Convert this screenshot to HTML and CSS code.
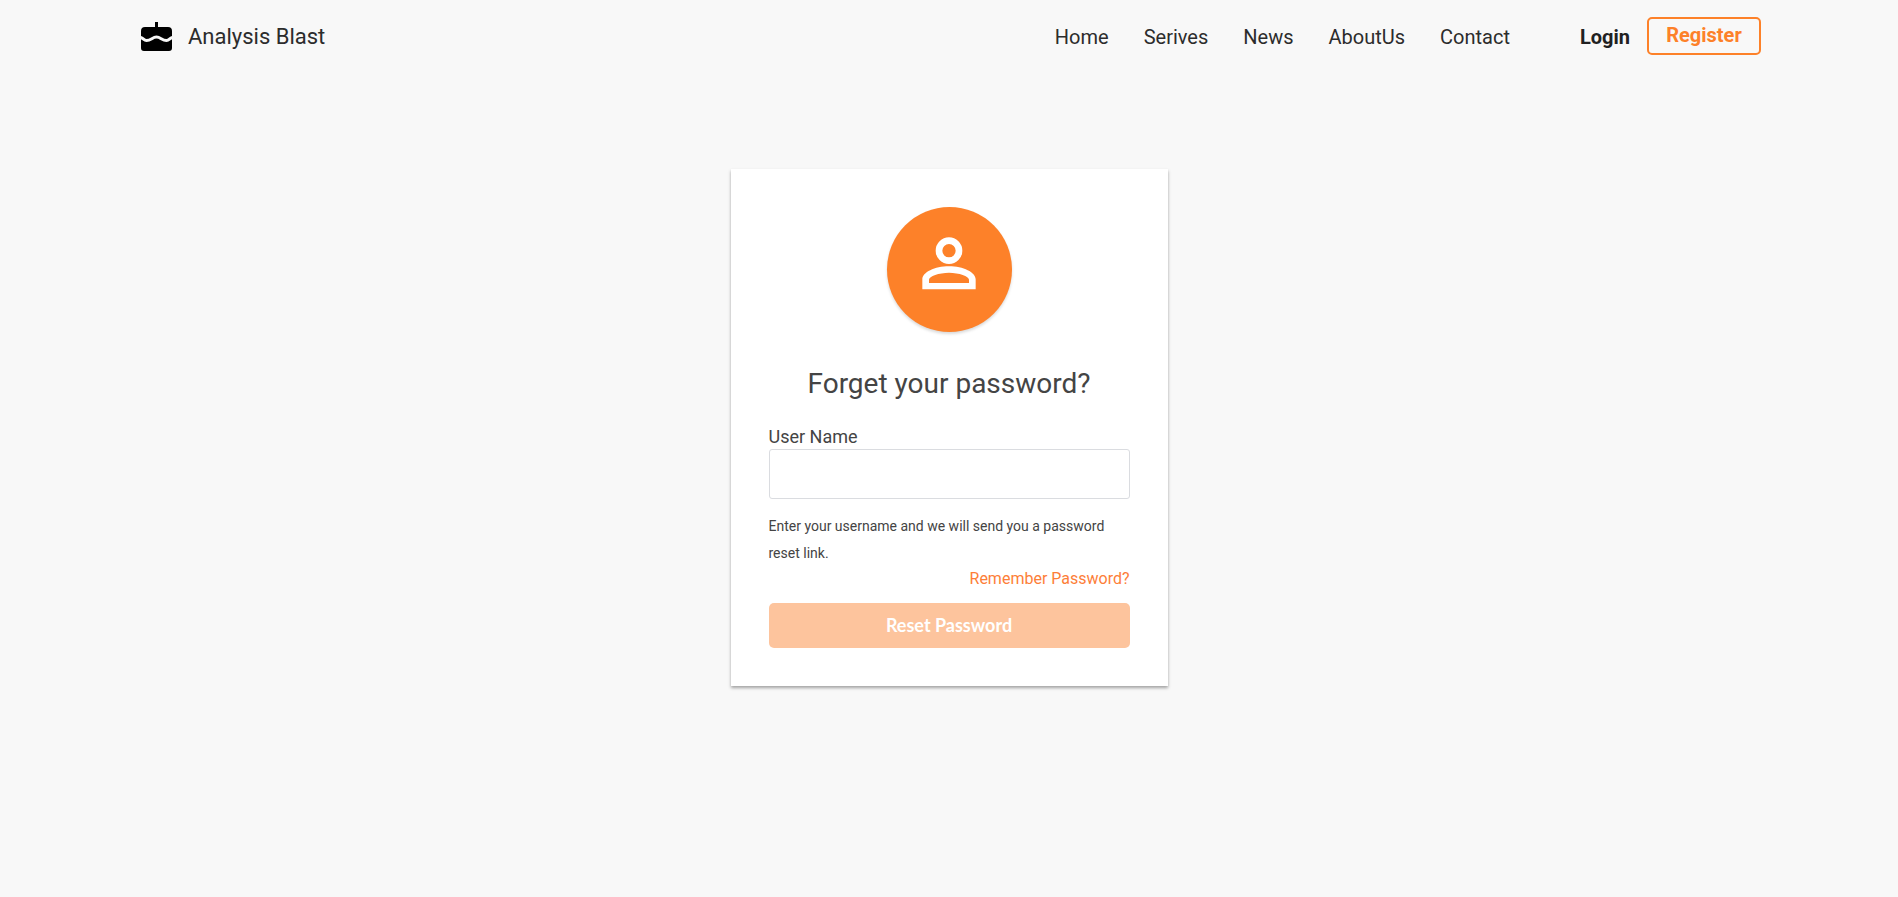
FILE: index.html
```html
<!DOCTYPE html>
<html lang="en">
<head>
  <meta charset="utf-8">
  <title>Analysis Blast</title>
  <link rel="stylesheet" href="styles.css">
</head>
<body>
  <header class="navbar">
    <a class="brand" href="#">
      <svg class="brand-icon" viewBox="0 0 31 29" aria-hidden="true">
        <path d="M14 0h3v5h10a4 4 0 0 1 4 4v17a3 3 0 0 1-3 3H3a3 3 0 0 1-3-3V9a4 4 0 0 1 4-4h10z"/>
        <path class="icing" d="M-1 15.500c3.500 0 3.500 3 6.500 3 4.500 0 6-3.500 10-3.500s5.500 3.500 10 3.500c3 0 3-3 6.500-3"/>
      </svg>
      <span>Analysis Blast</span>
    </a>
    <nav class="menu">
      <a href="#">Home</a>
      <a href="#">Serives</a>
      <a href="#">News</a>
      <a href="#">AboutUs</a>
      <a href="#">Contact</a>
    </nav>
    <a class="login" href="#">Login</a>
    <button class="register" type="button">Register</button>
  </header>

  <main class="page">
    <form class="card">
      <div class="avatar">
        <svg class="avatar-icon" viewBox="0 0 24 24" aria-hidden="true">
          <path fill-rule="evenodd" d="M12 4a4 4 0 1 1 0 8 4 4 0 0 1 0-8zm0 2a2 2 0 1 0 0 4 2 2 0 0 0 0-4zM12 12.700c4.300 0 8 1.800 8 3.900v3H4v-3c0-2.100 3.700-3.900 8-3.900zm0 1.900c-3 0-6 1.100-6 2.100v1h12v-1c0-1-3-2.100-6-2.100z"/>
        </svg>
      </div>
      <h1 class="title">Forget your password?</h1>
      <label class="label" for="username">User Name</label>
      <input class="input" id="username" type="text">
      <p class="hint">Enter your username and we will send you a password reset link.</p>
      <a class="remember" href="#">Remember Password?</a>
      <button class="reset" type="submit" disabled>Reset Password</button>
    </form>
  </main>
</body>
</html>
```

FILE: styles.css
```css
* {
  box-sizing: border-box;
}

body {
  min-height: 100vh;
  margin: 0;
  background-color: #f8f8f8;
  font-family: Roboto, sans-serif;
  color: #212121;
}

a {
  color: inherit;
  text-decoration: none;
}

.navbar {
  display: flex;
  align-items: center;
  height: 72px;
  padding: 0 137px 0 141px;
  font-size: 20px;
}

.brand {
  display: flex;
  align-items: center;
  gap: 16px;
  margin-right: auto;
  font-size: 22px;
  color: #2c2c2c;
}

.brand-icon {
  width: 31px;
  height: 29px;
  fill: #000;
}

.brand-icon .icing {
  fill: none;
  stroke: #f8f8f8;
  stroke-width: 3;
}

.menu {
  display: flex;
  gap: 35px;
  margin-right: 70px;
  padding-top: 2px;
  color: #2c2c2c;
}

.login {
  margin-right: 17px;
  padding-top: 2px;
  font-weight: bold;
}

.register {
  width: 114px;
  height: 38px;
  padding: 0 0 2px;
  border: 2px solid #fd8129;
  border-radius: 5px;
  background: none;
  color: #fd8129;
  font: bold 20px Roboto, sans-serif;
}

.page {
  padding: 97px 0;
}

.card {
  display: flex;
  flex-direction: column;
  width: 437px;
  margin: 0 auto;
  padding: 38px;
  background-color: #fff;
  box-shadow: 0 2px 3px rgba(0, 0, 0, 0.35);
  color: #444;
}

.avatar {
  align-self: center;
  width: 125px;
  height: 125px;
  padding-top: 17px;
  border-radius: 50%;
  background-color: #fd8129;
  box-shadow: 0 2px 3px rgba(0, 0, 0, 0.15);
  text-align: center;
}

.avatar-icon {
  width: 80px;
  height: 80px;
  fill: #fff;
}

.title {
  margin: 34px 0 23px;
  font-size: 28px;
  font-weight: normal;
  line-height: 36px;
  text-align: center;
}

.label {
  font-size: 18px;
  line-height: 24px;
}

.input {
  height: 50px;
  padding: 0 12px;
  border: 1px solid #dadce0;
  border-radius: 3px;
  font: 18px Roboto, sans-serif;
}

.hint {
  margin: 14px 0 0;
  font-size: 14px;
  line-height: 27px;
}

.remember {
  align-self: flex-end;
  font-size: 16px;
  line-height: 24px;
  color: #fd7e38;
}

.reset {
  height: 45px;
  margin-top: 12px;
  padding: 0 0 2px;
  border: none;
  border-radius: 5px;
  background-color: #fdc49d;
  color: #fff;
  font: bold 18px Lato, sans-serif;
}
```
